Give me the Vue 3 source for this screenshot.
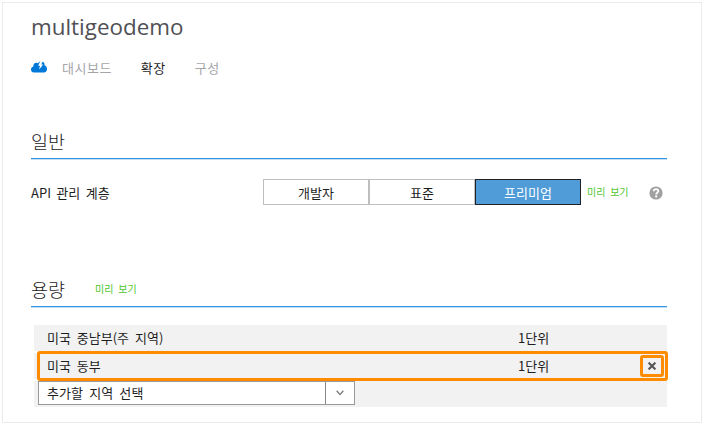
<script setup>
import { ref } from 'vue'

const tabs = ['대시보드', '확장', '구성']
const activeTab = ref('확장')
const tiers = ['개발자', '표준', '프리미엄']
const selectedTier = ref('프리미엄')
const regions = [
  { name: '미국 중남부(주 지역)', units: '1단위', removable: false },
  { name: '미국 동부', units: '1단위', removable: true },
]
</script>

<template>
  <main class="page">
    <h1 class="title">multigeodemo</h1>
    <nav class="tabs">
      <svg class="cloud" viewBox="0 0 16 12" width="16" height="12">
        <path d="M3 11.500C1.300 11.500 0 10.300 0 8.500C0 7 .9 5.900 2.300 5.500C2.200 3.200 3.500 1.700 5.200 1.700C6 1.700 6.500 2 6.900 2.300C7.700 1 9.100 .6 10.500 .6C12.600 .6 13.700 2.200 13.700 4.500C15.200 5.100 16 6.300 16 8C16 10 14.700 11.500 12.900 11.500Z" fill="#0078d7" />
        <path d="M9.300 0L7.200 4.700H9L8.100 8.500L12.200 3.600H10.200L12 0Z" fill="#fff" />
      </svg>
      <a v-for="tab in tabs" :key="tab" class="tab" :class="{ active: tab === activeTab }" @click="activeTab = tab">{{ tab }}</a>
    </nav>

    <section class="general">
      <header class="section-head"><h2>일반</h2></header>
      <div class="tier-row">
        <span class="tier-label">API 관리 계층</span>
        <div class="tiers">
          <button v-for="tier in tiers" :key="tier" class="tier" :class="{ selected: tier === selectedTier }" @click="selectedTier = tier">{{ tier }}</button>
        </div>
        <span class="preview">미리 보기</span>
        <svg class="help" viewBox="0 0 14 14" width="14" height="14">
          <circle cx="7" cy="7" r="6.600" fill="#a0a0a0" />
          <path d="M4.700 5.300C4.800 3.900 5.700 3.100 7.100 3.100C8.500 3.100 9.300 4 9.300 5.100C9.300 6.600 7.200 6.700 7.200 8.500" fill="none" stroke="#fff" stroke-width="1.900" />
          <rect x="6.200" y="9.400" width="2" height="2" fill="#fff" />
        </svg>
      </div>
    </section>

    <section class="capacity">
      <header class="section-head"><h2>용량</h2><span class="preview">미리 보기</span></header>
      <div class="regions">
        <div v-for="region in regions" :key="region.name" class="region">
          <span class="region-name">{{ region.name }}</span>
          <span class="units">{{ region.units }}</span>
          <div v-if="region.removable" class="highlight">
            <button class="remove" aria-label="삭제">
              <svg viewBox="0 0 8 8" width="8" height="8"><path d="M.6 .6L7.400 7.400M7.400 .6L.6 7.400" stroke="#555" stroke-width="2.100" /></svg>
            </button>
          </div>
        </div>
        <div class="region add">
          <div class="select">
            <span class="select-text">추가할 지역 선택</span>
            <span class="arrow">
              <svg viewBox="0 0 8 6" width="8" height="6"><path d="M.7 .8L4 4.600L7.300 .8" fill="none" stroke="#777" stroke-width="1.300" /></svg>
            </span>
          </div>
        </div>
      </div>
    </section>
  </main>
</template>

<style>
body {
  margin: 0;
  background: #fff;
}
</style>

<style scoped>
* {
  box-sizing: border-box;
}
.page {
  width: 700px;
  height: 421px;
  margin: 2px 0 0 2px;
  padding: 0 34px 0 28px;
  border: 1px solid #ebebeb;
  overflow: hidden;
  font-family: "Noto Sans CJK KR", sans-serif;
  font-size: 13px;
  line-height: 20px;
  color: #1e1e1e;
  white-space: nowrap;
}
.title {
  margin: 9px 0 0;
  font-family: "Open Sans", "Noto Sans", sans-serif;
  font-size: 22.4px;
  font-weight: 400;
  line-height: 30px;
  color: #505055;
}
.tabs {
  display: flex;
  align-items: center;
  height: 20px;
  margin-top: 16px;
}
.cloud {
  margin-right: 15px;
  position: relative;
  top: -1px;
}
.tab {
  margin-right: 29px;
  letter-spacing: 0.5px;
  color: #a5a5a8;
}
.tab.active {
  color: #1e1e1e;
}
.section-head {
  display: flex;
  align-items: center;
  height: 36px;
  border-bottom: 1px solid #3293e0;
  box-shadow: 0 1px 0 #c5e0f5;
}
.section-head h2 {
  margin: 0;
  font-size: 18.5px;
  font-weight: 300;
  line-height: 28px;
  color: #1a1a1a;
}
.general {
  margin-top: 45px;
}
.tier-row {
  display: flex;
  align-items: center;
  height: 26px;
  margin-top: 20px;
}
.tier-label {
  width: 232px;
  padding-top: 1px;
  word-spacing: 2.5px;
}
.tiers {
  display: flex;
}
.tier {
  width: 106px;
  height: 26px;
  padding: 1px 0 0;
  border: 1px solid #bebebe;
  background: #fff;
  font: inherit;
  color: inherit;
}
.tier.selected {
  border-color: #202124;
  background: #4f9cd8;
  color: #fff;
}
.preview {
  font-size: 10px;
  line-height: 16px;
  color: #4fc52f;
  word-spacing: 2.5px;
}
.tier-row .preview {
  width: 68px;
  padding-left: 6px;
}
.help {
  margin-top: 2px;
}
.capacity {
  margin-top: 66px;
}
.capacity .preview {
  margin-left: 30px;
}
.regions {
  display: flex;
  flex-direction: column;
  gap: 2px;
  width: 633px;
  margin: 18px 0 0 3px;
}
.region {
  position: relative;
  display: flex;
  align-items: center;
  height: 26px;
  padding-left: 13px;
  background: #f2f2f2;
  word-spacing: 3px;
}
.region-name {
  width: 471px;
}
.highlight {
  position: absolute;
  inset: -2px -1px -2px 3px;
  z-index: 1;
  display: flex;
  align-items: center;
  justify-content: flex-end;
  padding-right: 1px;
  border: 3px solid #ff8c00;
  border-radius: 3px;
}
.remove {
  display: flex;
  align-items: center;
  justify-content: center;
  width: 24px;
  height: 22px;
  padding: 0;
  border: 3px solid #ff8c00;
  border-radius: 3px;
  background: #f2f2f2;
}
.add {
  align-items: flex-start;
  padding-left: 4px;
}
.select {
  display: flex;
  width: 317px;
  height: 24px;
  border: 1px solid #999;
  background: #fff;
}
.select-text {
  flex: 1;
  padding-left: 8px;
  line-height: 22px;
  letter-spacing: 0.1px;
}
.arrow {
  display: flex;
  align-items: center;
  justify-content: center;
  width: 29px;
  border-left: 1px solid #888;
}
</style>
